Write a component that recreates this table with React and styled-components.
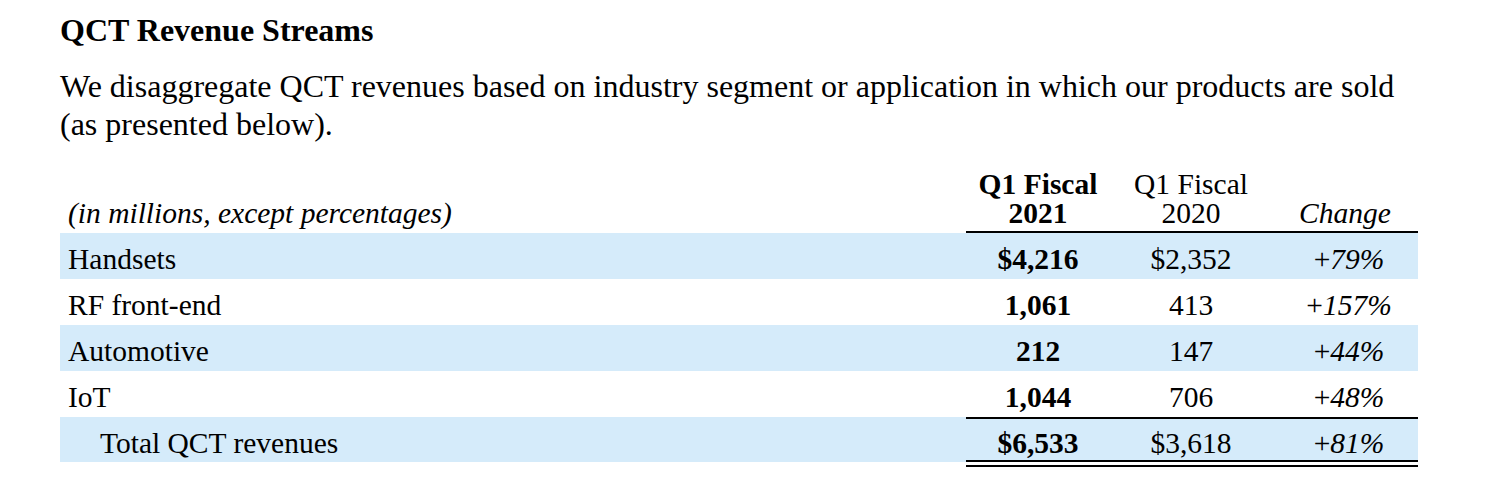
import React from "react";
import styled, { createGlobalStyle } from "styled-components";

const GlobalStyle = createGlobalStyle`
  html, body {
    margin: 0;
    padding: 0;
    background: #fff;
  }
  body {
    font-family: "Liberation Serif", "Times New Roman", serif;
    color: #000;
  }
`;

const shade = "#d5ebfa";

const Page = styled.div`
  width: 1358px;
  margin-left: 60px;
  padding-top: 12px;
`;

const Title = styled.h2`
  margin: 0;
  font-size: 32px;
  line-height: 36px;
  font-weight: bold;
`;

const Intro = styled.p`
  margin: 19px 0 0;
  font-size: 32px;
  line-height: 38px;
`;

const Table = styled.div`
  margin-top: 27px;
  font-size: 29.5px;
`;

const Row = styled.div`
  display: grid;
  grid-template-columns: 906px 144px 162px 146px;
  background: ${p => (p.$shaded ? shade : "transparent")};
`;

const HeadCell = styled.div`
  align-self: end;
  line-height: 29px;
  padding-bottom: 3px;
  white-space: nowrap;
  text-align: ${p => (p.$num ? "center" : "left")};
  padding-left: ${p => (p.$num ? "0" : "8px")};
  font-weight: ${p => (p.$bold ? "bold" : "normal")};
  font-style: ${p => (p.$italic ? "italic" : "normal")};
  border-bottom: ${p => (p.$rule ? "2px solid #000" : "2px solid transparent")};
`;

const Cell = styled.div`
  box-sizing: border-box;
  height: ${p => (p.$total ? (p.$num ? "50px" : "45px") : "46px")};
  padding-top: ${p => (p.$total && p.$num ? "5px" : "7px")};
  padding-left: ${p => p.$indent || 0}px;
  line-height: 38px;
  white-space: nowrap;
  text-align: ${p => (p.$num ? "center" : "left")};
  font-weight: ${p => (p.$bold ? "bold" : "normal")};
  font-style: ${p => (p.$italic ? "italic" : "normal")};
  background: ${p => (p.$fill ? shade : "transparent")};
  background-clip: padding-box;
  border-top: ${p => (p.$top ? "2px solid #000" : "none")};
  border-bottom: ${p => (p.$double ? "7px double #000" : "none")};
`;

const Plus = styled.span`
  font-style: normal;
`;

const rows = [
  { label: "Handsets", cur: "$4,216", prev: "$2,352", change: "79%" },
  { label: "RF front-end", cur: "1,061", prev: "413", change: "157%" },
  { label: "Automotive", cur: "212", prev: "147", change: "44%" },
  { label: "IoT", cur: "1,044", prev: "706", change: "48%" },
];

const Change = ({ value }) => (
  <>
    <Plus>+</Plus>
    {value}
  </>
);

export default function App() {
  return (
    <>
      <GlobalStyle />
      <Page>
        <Title>QCT Revenue Streams</Title>
        <Intro>
          We disaggregate QCT revenues based on industry segment or application in which our products are sold
          (as presented below).
        </Intro>
        <Table>
          <Row>
            <HeadCell $italic>(in millions, except percentages)</HeadCell>
            <HeadCell $num $bold $rule>
              Q1 Fiscal
              <br />
              2021
            </HeadCell>
            <HeadCell $num $rule>
              Q1 Fiscal
              <br />
              2020
            </HeadCell>
            <HeadCell $num $italic $rule>
              Change
            </HeadCell>
          </Row>
          {rows.map((r, i) => (
            <Row key={r.label} $shaded={i % 2 === 0}>
              <Cell $indent={8}>{r.label}</Cell>
              <Cell $num $bold>{r.cur}</Cell>
              <Cell $num>{r.prev}</Cell>
              <Cell $num $italic $indent={8}>
                <Change value={r.change} />
              </Cell>
            </Row>
          ))}
          <Row>
            <Cell $total $fill $indent={40}>Total QCT revenues</Cell>
            <Cell $total $fill $num $bold $top $double>$6,533</Cell>
            <Cell $total $fill $num $top $double>$3,618</Cell>
            <Cell $total $fill $num $italic $top $double $indent={8}>
              <Change value="81%" />
            </Cell>
          </Row>
        </Table>
      </Page>
    </>
  );
}
